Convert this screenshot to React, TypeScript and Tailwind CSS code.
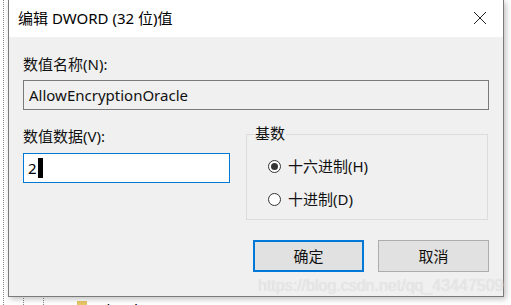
import React from "react";

const font = { fontFamily: '"Noto Sans", "Noto Sans CJK SC", sans-serif' };

function Radio({ checked, label }: { checked: boolean; label: string }) {
  return (
    <div className="flex items-center h-[20px]">
      <div className="w-[13px] h-[13px] rounded-full border border-[#333333] bg-white flex items-center justify-center">
        {checked && <div className="w-[7px] h-[7px] rounded-full bg-[#333333]" />}
      </div>
      <span className="ml-[7px] text-[15px] leading-[20px] text-[#111]">{label}</span>
    </div>
  );
}

export default function App() {
  return (
    <div className="relative w-[511px] h-[305px] bg-white overflow-hidden" style={font}>
      {/* dotted tree lines in background */}
      <div className="absolute left-[3px] top-0 h-[305px] border-l border-dotted border-[#888]" />
      <div className="absolute left-[23px] top-[296px] h-[9px] border-l border-dotted border-[#888]" />
      <div className="absolute left-[43px] top-[296px] h-[9px] border-l border-dotted border-[#888]" />
      <div className="absolute left-[77px] top-[301px] w-[10px] h-[4px] bg-[#e8c766]" />
      <div className="absolute left-[97px] top-[300px] text-[15px] leading-[18px] text-black">Cloud Fonts</div>

      {/* dialog window */}
      <div className="absolute left-[8px] top-0 w-[496px] h-[297px] border border-t-0 border-[#7a7a7a] bg-[#f0f0f0] shadow-[2px_2px_6px_rgba(0,0,0,0.25)] flex flex-col">
        <div className="h-[37px] bg-white flex items-center justify-between pl-[9px] pr-[16px]">
          <span className="text-[15px] leading-[20px] text-black -mt-[1px]">编辑 DWORD (32 位)值</span>
          <svg width="14" height="14" viewBox="0 0 14 14" className="-mt-[1px]">
            <path d="M1 1 L13 13 M13 1 L1 13" stroke="#222" strokeWidth="1" fill="none" />
          </svg>
        </div>

        <div className="flex-1 flex flex-col pl-[14px] pr-[14px]">
          <div className="mt-[17px] text-[15px] leading-[20px] text-[#111]">数值名称(N):</div>
          <div className="mt-[6px] h-[30px] border border-[#7a7a7a] bg-[#f0f0f0] flex items-center pl-[5px] text-[15px] text-[#111]">
            AllowEncryptionOracle
          </div>

          <div className="flex mt-[14px]">
            <div className="w-[207px] flex flex-col">
              <div className="mt-[2px] text-[15px] leading-[20px] text-[#111]">数值数据(V):</div>
              <div className="mt-[7px] h-[30px] border border-[#0078d7] bg-white flex items-center pl-[4px] text-[15px] text-black">
                <span>2</span>
                <span className="ml-[1px] w-[5px] h-[20px] bg-black" />
              </div>
            </div>

            <div className="ml-[16px] w-[242px] relative mt-[10px] h-[86px] border border-[#dcdcdc]">
              <div className="absolute left-[7px] -top-[12px] px-[1px] bg-[#f0f0f0] text-[15px] leading-[20px] text-[#111]">基数</div>
              <div className="flex flex-col pl-[21px] pt-[21px] gap-[13px]">
                <Radio checked label="十六进制(H)" />
                <Radio checked={false} label="十进制(D)" />
              </div>
            </div>
          </div>

          <div className="flex justify-end gap-[14px] mt-[20px]">
            <button className="w-[111px] h-[32px] border-2 border-[#0078d7] bg-[#e1e1e1] text-[15px] text-[#111]">确定</button>
            <button className="w-[111px] h-[32px] border border-[#adadad] bg-[#e1e1e1] text-[15px] text-[#111]">取消</button>
          </div>
        </div>
      </div>

      <div
        className="absolute left-[258px] top-[277px] text-[16px] leading-[18px] text-[#e6e6e6]"
        style={{ fontFamily: '"Liberation Sans", Arial, sans-serif', textShadow: "0 0 1px #d8d8d8" }}
      >
        https://blog.csdn.net/qq_43447509
      </div>
    </div>
  );
}
